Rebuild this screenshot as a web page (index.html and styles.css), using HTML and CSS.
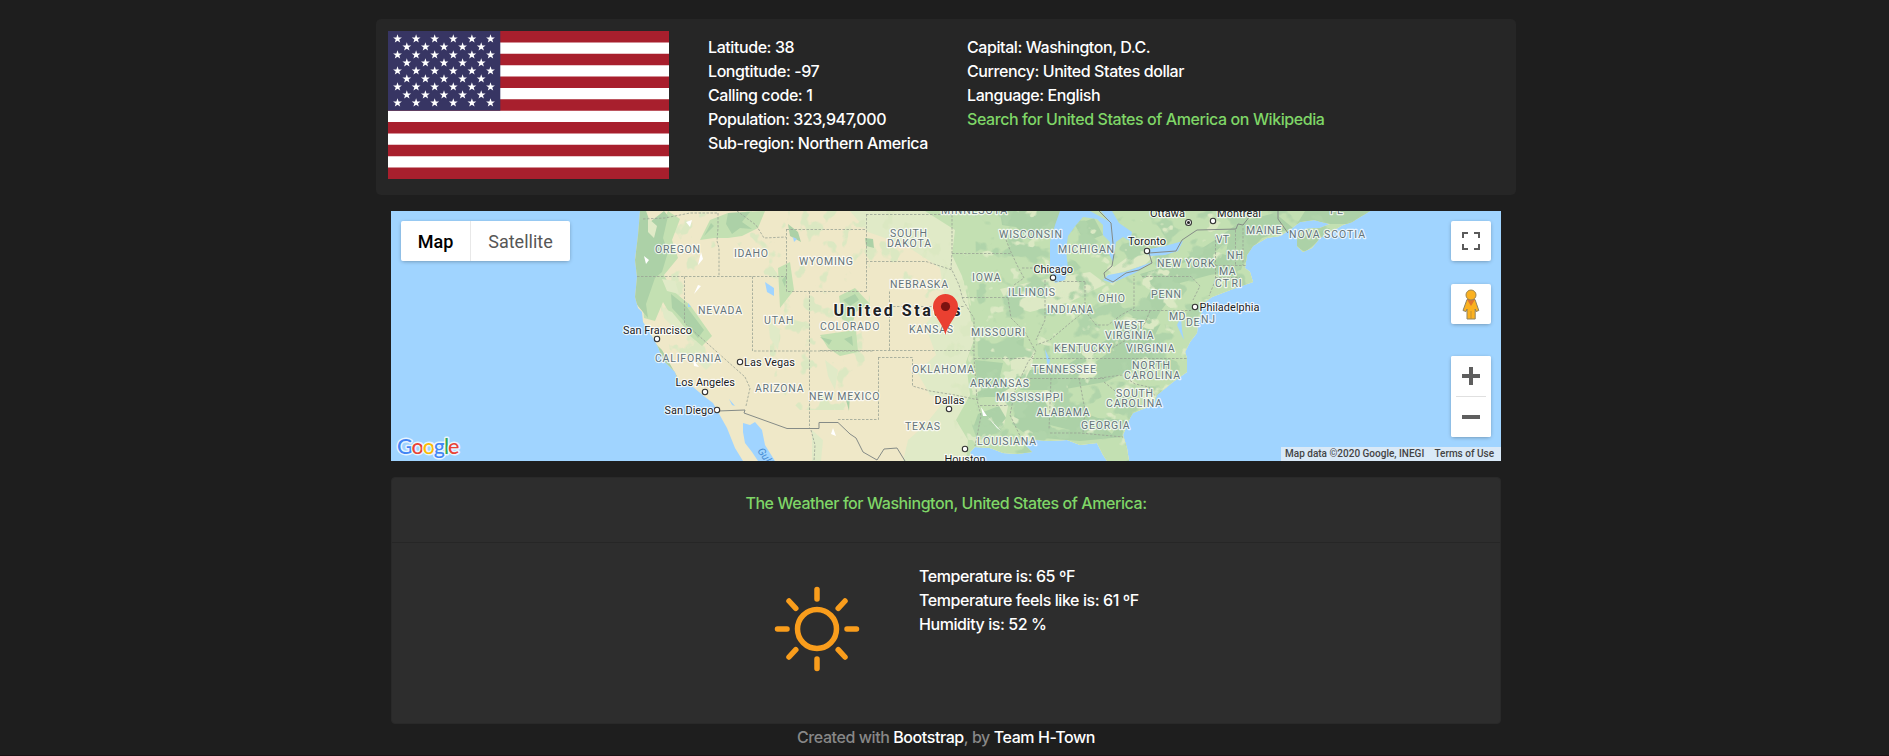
FILE: index.html
```html
<!DOCTYPE html>
<html lang="en">
<head>
<meta charset="utf-8">
<title>Country Info</title>
<link rel="stylesheet" href="styles.css">
</head>
<body>
<main class="page">
  <section class="country">
    <svg class="flag" viewBox="0 0 281 148" preserveAspectRatio="none">
      <defs>
        <path id="star" d="M0-4.6 1.1-1.4H4.4L1.8.6 2.7 3.8 0 1.9-2.7 3.8-1.8.6-4.4-1.4H-1.1Z" fill="#fff"/>
        <g id="row6"><use href="#star" x="9.5"/><use href="#star" x="28.1"/><use href="#star" x="46.7"/><use href="#star" x="65.3"/><use href="#star" x="83.9"/><use href="#star" x="102.5"/></g>
        <g id="row5"><use href="#star" x="18.8"/><use href="#star" x="37.4"/><use href="#star" x="56"/><use href="#star" x="74.6"/><use href="#star" x="93.2"/></g>
      </defs>
      <rect width="281" height="148" fill="#fff"/>
      <path d="M0 5.69H281M0 28.46H281M0 51.23H281M0 74H281M0 96.77H281M0 119.54H281M0 142.31H281" stroke="#a81f2d" stroke-width="11.38"/>
      <rect width="112.3" height="79.7" fill="#373563"/>
      <use href="#row6" y="7.8"/><use href="#row5" y="15.8"/><use href="#row6" y="23.8"/><use href="#row5" y="31.8"/><use href="#row6" y="39.8"/><use href="#row5" y="47.8"/><use href="#row6" y="55.8"/><use href="#row5" y="63.8"/><use href="#row6" y="71.8"/>
    </svg>
    <div class="facts">
      <div><span>Latitude: 38</span></div>
      <div><span>Longtitude: -97</span></div>
      <div><span>Calling code: 1</span></div>
      <div><span>Population: 323,947,000</span></div>
      <div><span>Sub-region: Northern America</span></div>
    </div>
    <div class="facts">
      <div>Capital: Washington, D.C.</div>
      <div>Currency: United States dollar</div>
      <div>Language: English</div>
      <a class="accent" href="#">Search for United States of America on Wikipedia</a>
    </div>
  </section>

  <section class="map">
    <svg class="tiles" viewBox="391 211 1110 250">
      <defs>
        <filter id="mottle" x="0" y="0" width="100%" height="100%" color-interpolation-filters="sRGB">
          <feTurbulence type="fractalNoise" baseFrequency=".04 .05" numOctaves="3" seed="8"/>
          <feColorMatrix values="0 0 0 0 .69  0 0 0 0 .83  0 0 0 0 .665  14 0 0 0 -7.6"/>
          <feComposite in2="SourceGraphic" operator="in"/>
        </filter>
        <filter id="mottleLight" x="0" y="0" width="100%" height="100%" color-interpolation-filters="sRGB">
          <feTurbulence type="fractalNoise" baseFrequency=".05 .06" numOctaves="3" seed="21"/>
          <feColorMatrix values="0 0 0 0 .86  0 0 0 0 .915  0 0 0 0 .77  14 0 0 0 -9.1"/>
          <feComposite in2="SourceGraphic" operator="in"/>
        </filter>
        <filter id="scrub" x="0" y="0" width="100%" height="100%" color-interpolation-filters="sRGB">
          <feTurbulence type="fractalNoise" baseFrequency=".06 .05" numOctaves="3" seed="5"/>
          <feColorMatrix values="0 0 0 0 .86  0 0 0 0 .91  0 0 0 0 .76  14 0 0 0 -8.4"/>
          <feComposite in2="SourceGraphic" operator="in"/>
        </filter>
        <clipPath id="land"><path d="M640 211 638 235 635 260 637 277 635 297 638 308 642 312 643 322 647 328 653 338 658 347 663 360 675 372 678 382 693 387 705 397 713 403 718 412 727 428 735 448 743 461H758L752 452 745 443 743 432 743 423 750 425 755 422 762 430 765 445 775 461H972L970 452 975 447 990 448 1003 453 1017 454 1032 452 1022 442 1037 440 1050 441 1067 440 1080 445 1097 443 1103 455 1107 461H1129L1127 448 1123 435 1130 418 1133 413 1153 405 1157 395 1173 382 1187 372 1187 358 1185 352 1190 342 1197 333 1198 322 1205 302 1212 297 1233 289 1253 282 1250 272 1245 268 1247 255 1253 246 1267 238 1280 236 1291 229 1300 222 1314 220 1330 224 1320 228 1305 229 1297 235 1297 246 1303 252 1312 248 1320 238 1343 225 1352 222 1370 211Z"/></clipPath>
      </defs>
      <rect x="391" y="211" width="1110" height="250" fill="#a0d4ff"/>
      <g clip-path="url(#land)">
        <rect x="630" y="211" width="740" height="250" fill="#efe8c8"/>
        <path fill="#e0eac7" d="M850 211 868 232 905 245 940 268 945 300 925 325 936 355 917 372 930 395 945 400 925 425 908 440 903 461H1380V211Z"/>
        <path fill="#c3e0b2" d="M925 211 955 230 952 255 962 276 968 300 974 340 966 362 970 395 956 420 968 440 966 461H1380V211Z"/>
        <path fill="#000" filter="url(#scrub)" d="M640 211H960L975 340 960 461 940 330 870 260V360L850 410H800L770 380V290L735 240 700 270 710 370 670 350Z"/>
        <path fill="#dde9c5" d="M1000 289 1040 280 1090 272 1106 284 1070 302 1030 312 1008 305ZM1008 345 1035 350 1030 375 1010 397 1004 425 985 440 995 410 1012 375ZM1110 270 1140 248 1170 238 1145 265 1112 275Z"/>
        <path fill="#c3e0b2" d="M668 211 680 219 672 240 678 258 664 275 672 290 690 305 712 336 702 346 676 324 663 302 655 321 644 318 640 275ZM700 240 710 220 728 213 765 211 758 228 742 236 728 238 714 238ZM839 296 855 288 870 304 856 312 852 325 842 319ZM820 335 856 330 858 352 840 356 828 348ZM778 268 790 262 794 290 780 308Z"/>
        <g fill="#acd1a7">
          <path d="M638 211H646L650 222 664 211 668 216 663 238 668 252 662 272 655 278 646 304 648 318 638 306 634 300 635 260Z"/>
          <path d="M671 294 686 306 704 330 698 338 684 321 672 308Z"/>
          <path d="M704 236 711 223 714 226ZM728 213 750 212 742 222 752 229 740 228 732 234 726 224ZM788 224 798 232 801 242 790 236ZM843 300 855 294 859 300 850 306ZM844 339 852 336 853 346ZM820 337 832 340 829 345ZM787 274 785 287 782 280ZM846 400 850 395 849 411Z"/>
          <path d="M1000 211H1062L1052 233 1030 240 1016 227 1002 225ZM1075 225 1094 218 1103 235 1085 242ZM975 360 1003 363 1000 376 1010 388 995 397 978 397ZM1030 370 1067 365 1114 335 1140 310 1151 290 1140 274 1180 262 1215 240 1240 222 1275 213 1293 228 1262 238 1246 255 1241 270 1210 275 1180 283 1165 315 1150 345 1158 362 1130 370 1105 382 1060 390 1020 390Z"/>
          <path d="M1020 395 1052 393 1070 408 1098 418 1125 420 1122 437 1080 441 1030 437 1012 424ZM978 414 999 406 1006 418 992 435 973 428ZM1297 224H1370V211H1305ZM1298 236 1330 228 1320 240 1305 252 1296 246ZM1007 344 1024 338 1023 354 1012 354Z"/>
          <path d="M654 342 662 350 674 371 678 378 662 364ZM865 238 873 239 874 248 866 246Z"/>
        </g>
        <path fill="#c3e0b2" d="M1060 372 1085 362 1106 345 1112 350 1090 366 1065 378ZM1150 330 1160 312 1175 292 1178 298 1164 322ZM1040 400 1060 398 1062 410ZM1170 268 1196 258 1190 268ZM1215 252 1228 240 1226 255ZM1100 425 1118 424 1112 434ZM1050 425 1070 430 1058 437Z"/>
        <g fill="#e0eac7"><path d="M648 218 657 226 654 238 648 232ZM662 279 675 281 679 294 667 291ZM662 308 672 312 685 328 676 330 664 318ZM695 350 712 364 706 370 696 360ZM768 320 780 330 778 350 770 338ZM825 360 838 370 835 390 828 376ZM812 430 823 440 821 461H812Z"/></g>
        <path fill="#000" filter="url(#mottle)" d="M975 211H1370V461H985L970 420 978 360Z"/>
        <path fill="#000" filter="url(#mottleLight)" d="M955 211H1240L1190 461H968Z"/>
        <path fill="#fff" d="M698 265 703 259 701 252ZM694 294 701 286 698 285ZM686 222 692 220 690 227ZM644 256 649 260 646 264ZM833 428 836 436 831 434ZM693 360 699 367 694 366ZM981 407 987 416 983 416ZM987 416 1001 431 997 428Z"/>
      </g>
      <g fill="#a0d4ff">
        <path d="M1060 211 1055 225 1050 242 1050 268 1055 283 1065 280 1068 268 1066 250 1068 236 1076 225 1083 217 1097 219 1103 225 1103 235 1110 242 1108 252 1113 262 1116 242 1123 237 1130 241 1132 232 1119 223 1112 211H1101L1110 222 1090 211Z"/>
        <path d="M1103 280 1108 275 1125 272 1152 262 1135 273 1112 283ZM1146 253 1150 249 1165 246 1183 241 1178 251 1165 255 1150 256ZM765 282 774 288 774 296 767 292ZM793 237 797 239 794 242ZM688 303 691 307 688 307ZM729 399 735 406 732 405ZM1181 317 1182 330 1184 340 1181 334 1177 325ZM1045 349 1050 360 1048 370Z"/>
      </g>
      <path class="state-line" d="M643 219 665 218 690 213 718 213 M718 213V228L717 241 719 248V276 M637 276.500H786.500 M684.500 276.500V323L745 377 M752.500 276.500V351H874 M786.500 229V291.500H867 M786.500 229.500H866 M737 211 756 225 764 238 786 237 M809.500 291.500V429 M866.500 214V291.500 M866 214.500H952 M866 261.500H926L940 266 952 270 M889.500 291.500V350 M889 306.500H964 M820 350.500H974 M878.500 357.500V419.500H838 M878 357.500H912.500V386L930 391 955 395 979 400 M952 253.500H1011 M952 211V253L951 268 959 285 963 300 970 312 974 318V358L977 400 981 416 975 446 M962 297.500H1008L1014 285 1024 278 1018 267 1010 250 1003 232 M1022 268H1050 M1008 298 1011 318 1025 332 1036 352 1028 362 1015 390 1010 415 1022 440 M974 358.500H1026 M1045 280V320L1036 340 M1085 282V311L1070 323 1050 340 1036 345 M1055 281.500H1085 M1085 311 1096 325 1108 325 1121 315 1134 308V276 M1032 358.500H1187 M1026 378.500H1104 M1051 378 1049 430 M1079 378 1085 410 1083 433 M1050 433H1080L1123 437 M1133 310.500H1191 M1142 276.500H1191L1200 286 1193 300 M1104 382 1130 403 M1100 378 1122 375 1135 384 1149 387 1155 396 M1150 311 1144 325 1130 338 1112 348 M1215.500 236V280L1209 296 M1235.500 230V266 M1243 228 1243 265 M1215 265.500H1246 M1215 277.500H1240 M980 405.500H1008 M745 377 750 388 746 406 M811 430 815 445 814 461"/>
      <path class="country-line" d="M718 411 745 410 744 413 787 428.500H819V422.500H838L850 434 856 438 863 452 877 460 884 449 897 448 905 461 M1099 211 1111 223 1114 254 1112 266 1104 273 1105 278 1113 282 1126 273 1139 270 1152 263 1149 253 1176 251 1182 240 1197 230 1236 229 1238 224 1243 225 1250 216 M1278 211V219L1288 233"/>
      <g class="towns">
        <circle cx="657" cy="339" r="2.7"/><circle cx="740" cy="362" r="2.7"/><circle cx="705" cy="392" r="2.7"/><circle cx="717" cy="410" r="2.7"/><circle cx="1053" cy="277.700" r="2.7"/><circle cx="949" cy="409" r="2.7"/><circle cx="965" cy="449" r="2.7"/><circle cx="1147" cy="251" r="2.7"/><circle cx="1213" cy="221" r="2.7"/><circle cx="1195" cy="307" r="2.7"/><circle cx="1188.500" cy="222.500" r="3"/><circle cx="1188.500" cy="222.500" r="1" fill="#111"/>
      </g>
      <g class="states">
        <text x="655" y="252.700" textLength="45">OREGON</text><text x="734" y="256.700" textLength="34">IDAHO</text><text x="799" y="264.700" textLength="54">WYOMING</text><text x="698" y="313.700" textLength="44">NEVADA</text><text x="764" y="323.700" textLength="29.500">UTAH</text><text x="820" y="329.700" textLength="59.500">COLORADO</text><text x="655" y="361.700" textLength="66">CALIFORNIA</text><text x="755" y="392" textLength="48.500">ARIZONA</text><text x="809" y="400" textLength="70.500">NEW MEXICO</text>
        <text x="890" y="237" textLength="37">SOUTH</text><text x="887" y="246.700" textLength="44">DAKOTA</text><text x="890" y="288" textLength="58">NEBRASKA</text><text x="909" y="332.700" textLength="44">KANSAS</text><text x="972" y="281" textLength="28.500">IOWA</text><text x="999" y="237.500" textLength="63">WISCONSIN</text><text x="1058" y="252.700" textLength="56">MICHIGAN</text><text x="1008" y="295.700" textLength="47">ILLINOIS</text><text x="1047" y="312.700" textLength="46">INDIANA</text><text x="971" y="335.700" textLength="54">MISSOURI</text><text x="1054" y="352" textLength="58">KENTUCKY</text><text x="912" y="372.700" textLength="62">OKLAHOMA</text><text x="1032" y="372.700" textLength="64">TENNESSEE</text><text x="970" y="386.700" textLength="59">ARKANSAS</text><text x="996" y="401" textLength="67">MISSISSIPPI</text><text x="1036.500" y="415.700" textLength="53">ALABAMA</text><text x="1081" y="428.700" textLength="48.500">GEORGIA</text><text x="905" y="429.700" textLength="35">TEXAS</text><text x="977" y="445" textLength="59">LOUISIANA</text><text x="941" y="214" textLength="66">MINNESOTA</text>
        <text x="1098" y="302" textLength="27">OHIO</text><text x="1151" y="298" textLength="30">PENN</text><text x="1157" y="267" textLength="57.500">NEW YORK</text><text x="1216" y="243" textLength="13">VT</text><text x="1227" y="259" textLength="16">NH</text><text x="1219" y="275" textLength="16.500">MA</text><text x="1215" y="287" textLength="14">CT</text><text x="1231.500" y="287" textLength="10">RI</text><text x="1246" y="234" textLength="35.500">MAINE</text><text x="1289" y="238" textLength="76">NOVA SCOTIA</text><text x="1169" y="320" textLength="16.500">MD</text><text x="1186" y="326" textLength="13.500">DE</text><text x="1201" y="323" textLength="14">NJ</text><text x="1114" y="329" textLength="30">WEST</text><text x="1105" y="339" textLength="48.500">VIRGINIA</text><text x="1126" y="352" textLength="48.500">VIRGINIA</text><text x="1132" y="369" textLength="38">NORTH</text><text x="1124" y="379" textLength="56">CAROLINA</text><text x="1116" y="397" textLength="37">SOUTH</text><text x="1106" y="407" textLength="56">CAROLINA</text><text x="1330" y="213.500" textLength="13">PE</text>
      </g>
      <g class="cities">
        <text x="623" y="333.700" textLength="69">San Francisco</text><text x="744" y="365.700" textLength="51">Las Vegas</text><text x="675.500" y="385.700" textLength="59.500">Los Angeles</text><text x="664.500" y="414" textLength="49">San Diego</text><text x="1033.500" y="273" textLength="39.500">Chicago</text><text x="934.500" y="404" textLength="30">Dallas</text><text x="944.500" y="463" textLength="41">Houston</text><text x="1128" y="245" textLength="38">Toronto</text><text x="1150" y="217" textLength="35">Ottawa</text><text x="1217" y="216.500" textLength="44">Montreal</text><text x="1199.500" y="311" textLength="60">Philadelphia</text>
      </g>
      <text class="nation" x="833.500" y="315.700" textLength="127">United States</text>
      <text class="gulf" transform="translate(757 451) rotate(54)">Gulf of California</text>
      <path d="M945.500 335C944 325 933 316 933 306.500A12.500 12.500 0 0 1 958 306.500C958 316 947 325 945.500 335Z" fill="#ea4031"/>
      <circle cx="945.500" cy="306.500" r="4.600" fill="#7b1210"/>
      <text class="logo" x="397" y="453.500" textLength="62.500"><tspan fill="#4285f4">G</tspan><tspan fill="#ea4335">o</tspan><tspan fill="#fbbc05">o</tspan><tspan fill="#4285f4">g</tspan><tspan fill="#34a853">l</tspan><tspan fill="#ea4335">e</tspan></text>
    </svg>
    <div class="map-types">
      <button class="map-type active">Map</button>
      <button class="map-type">Satellite</button>
    </div>
    <div class="controls">
      <button class="control fullscreen"><svg width="18" height="18" viewBox="0 0 18 18"><path d="M1 6V1H6M12 1H17V6M17 12V17H12M6 17H1V12" fill="none" stroke="#5a5a5a" stroke-width="2"/></svg></button>
      <button class="control pegman"><svg width="18" height="31" viewBox="0 0 18 31"><path d="M5 10.500H13L16.800 21.500 14 22.500 13.200 20V30H5V20L4 22.500 1 21.500Z" fill="#fbb120" stroke="#8e8363"/><path d="M5 10.500H13L9 17Z" fill="#df7430"/><path d="M9 22V30" stroke="#b98934" stroke-width=".8"/><circle cx="9" cy="6" r="5" fill="#fbb120" stroke="#9d8550"/></svg></button>
      <div class="zoom">
        <button class="control"><svg width="18" height="18" viewBox="0 0 18 18"><path d="M9 0V18M0 9H18" stroke="#5e5e5e" stroke-width="4"/></svg></button>
        <i class="rule"></i>
        <button class="control"><svg width="18" height="18" viewBox="0 0 18 18"><path d="M0 9H18" stroke="#5e5e5e" stroke-width="4"/></svg></button>
      </div>
    </div>
    <div class="credits"><span>Map data ©2020 Google, INEGI</span><span>Terms of Use</span></div>
  </section>

  <section class="weather">
    <header class="weather-title"><span>The Weather for Washington, United States of America:</span></header>
    <div class="weather-body">
      <svg class="sun" viewBox="-43 -43 86 86"><g fill="none" stroke="#f99d1c" stroke-width="5.500" stroke-linecap="round"><circle r="19.500"/><path d="M0-39.500V-30M0 39.500V30M-39.500 0H-30M39.500 0H30M-28-28-21.200-20.700M28-28 21.200-20.700M-28 28-21.200 20.700M28 28 21.200 20.700"/></g></svg>
      <div class="readings">
        <div>Temperature is: 65 ºF</div>
        <div>Temperature feels like is: 61 ºF</div>
        <div>Humidity is: 52 %</div>
      </div>
    </div>
  </section>
  <footer class="footer">Created with <a href="#">Bootstrap</a>, by <a href="#">Team H-Town</a></footer>
</main>
</body>
</html>
```
FILE: styles.css
```css
* { box-sizing: border-box; }
body {
  margin: 0;
  height: 756px;
  overflow: hidden;
  background: #1e1e1e;
  border-bottom: 1px solid #1b1114;
  color: #fff;
  font: 450 16px/24px Inter, "Liberation Sans", sans-serif;
  letter-spacing: -0.42px;
}
a { color: inherit; text-decoration: none; }
button { border: 0; padding: 0; background: #fff; font-family: Roboto, sans-serif; }
.page { width: 1140px; margin-left: 376px; padding-top: 19px; }
.country {
  display: flex;
  height: 176px;
  padding: 12px;
  border-radius: 5px;
  background: #262626;
}
.flag { width: 281px; height: 148px; margin-right: 39px; flex: none; }
.facts { padding-top: 4px; width: 259px; white-space: nowrap; }
.accent { color: #7fd667; }

.map {
  position: relative;
  width: 1110px;
  height: 250px;
  margin: 16px 15px;
  overflow: hidden;
  font-family: Roboto, sans-serif;
}
.tiles { display: block; width: 1110px; height: 250px; }
.state-line { fill: none; stroke: #9aa295; stroke-width: 1; stroke-dasharray: 2.5 1.5; opacity: .8; }
.country-line { fill: none; stroke: #858b87; stroke-width: 1; }
.towns { fill: #fff; stroke: #333; stroke-width: 1.1; }
.tiles text { paint-order: stroke; stroke: #fff; stroke-width: 2.4px; stroke-opacity: .75; stroke-linejoin: round; letter-spacing: 0; font-family: Roboto, sans-serif; }
.states { fill: #64747a; font-size: 10.5px; }
.cities { fill: #202124; font-size: 11px; }
.tiles .nation { fill: #202124; font-size: 16px; font-weight: 700; }
.tiles .gulf { fill: #4a8ed3; font-size: 10.5px; font-style: italic; stroke: none; }
.tiles .logo { font-family: Lato, sans-serif; font-size: 21.5px; font-weight: 500; stroke-width: 3px; }
.map-types {
  position: absolute;
  left: 10px;
  top: 10px;
  display: flex;
  height: 40px;
  border-radius: 2px;
  overflow: hidden;
  box-shadow: 0 1px 4px -1px rgba(0, 0, 0, .4);
}
.map-type { width: 99px; color: #565656; font-size: 18px; letter-spacing: 0; }
.map-type.active { width: 70px; border-right: 1px solid #e8e8e8; color: #000; font-weight: 500; }
.controls {
  position: absolute;
  right: 10px;
  top: 10px;
  display: flex;
  flex-direction: column;
}
.control {
  display: flex;
  align-items: center;
  justify-content: center;
  width: 40px;
  height: 40px;
  border-radius: 2px;
}
.fullscreen, .pegman, .zoom { box-shadow: 0 1px 4px -1px rgba(0, 0, 0, .4); }
.pegman { margin: 23px 0 32px; }
.zoom { border-radius: 2px; background: #fff; }
.rule { display: block; height: 1px; margin: 0 5px; background: #e0e0e0; }
.credits {
  position: absolute;
  right: 0;
  bottom: 0;
  display: flex;
  justify-content: space-between;
  width: 220px;
  height: 14px;
  padding: 0 7px 0 4px;
  background: #d9e9f7;
  color: #444;
  font-size: 10px;
  font-weight: 500;
  line-height: 14px;
  letter-spacing: 0;
}
.weather {
  width: 1110px;
  height: 247px;
  margin: 0 15px;
  border: 1px solid #292929;
  border-radius: 4px;
  background: #2d2d2d;
}
.weather-title {
  height: 65px;
  padding-top: 13px;
  border-bottom: 1px solid #262626;
  color: #7fd667;
  text-align: center;
}
.weather-body { display: flex; padding: 21px 0 0 382px; }
.sun { width: 86px; height: 86px; margin: 22px 59px 0 0; }
.footer { padding-top: 1px; color: #888; text-align: center; }
.footer a { color: #fff; }
```
